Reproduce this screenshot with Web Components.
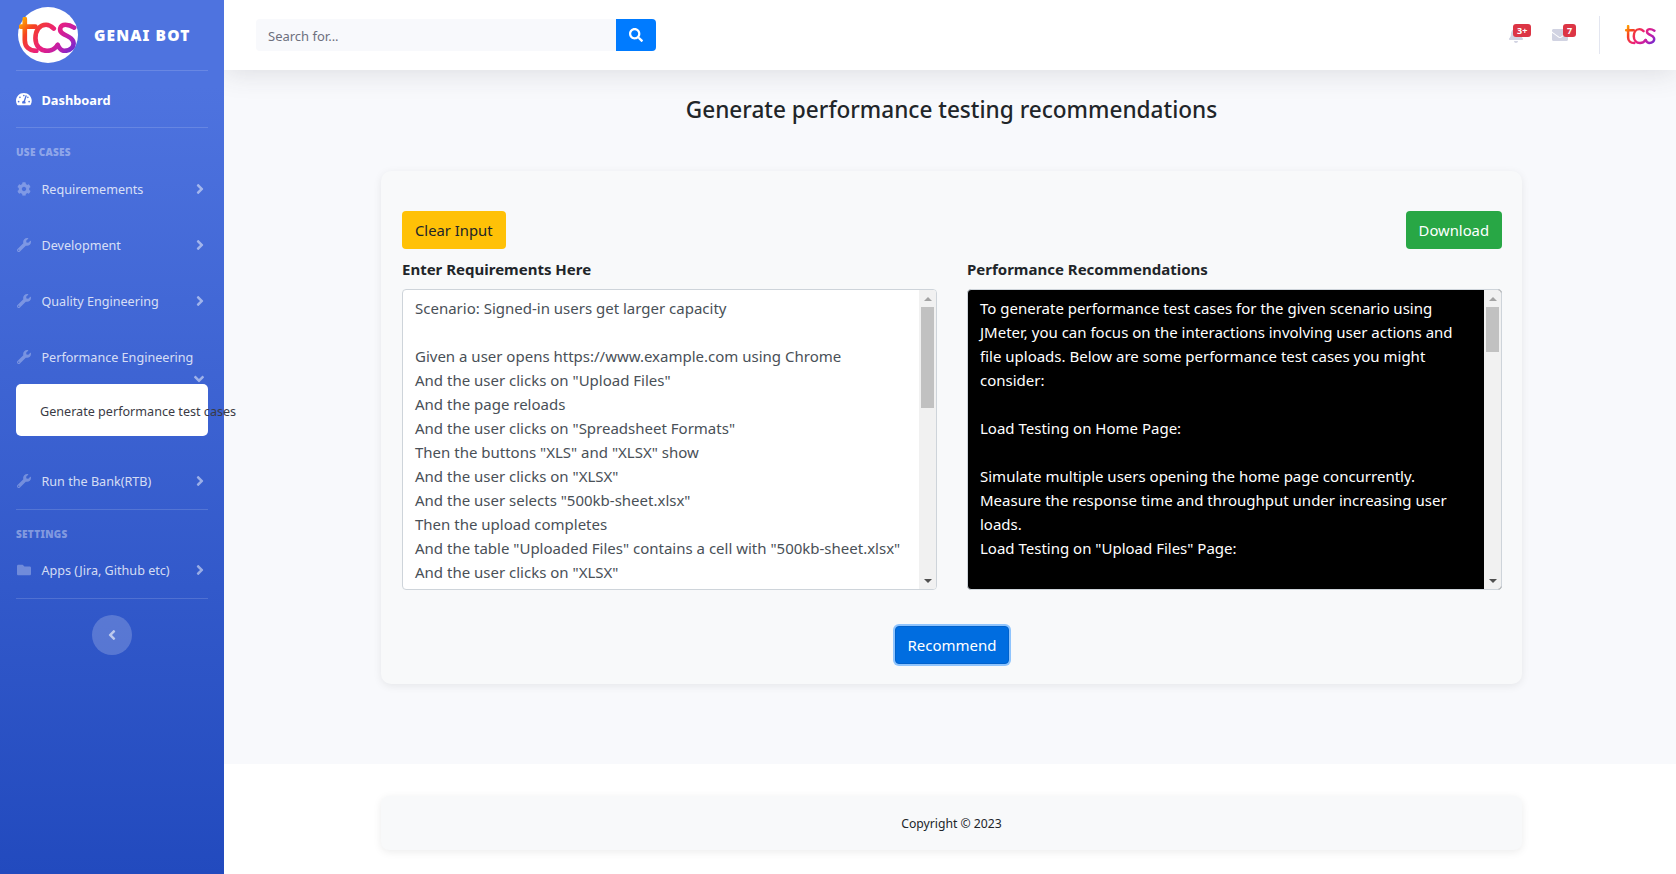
<!DOCTYPE html>
<html lang="en">
<head>
<meta charset="utf-8">
<title>GenAI Bot</title>
<style>
  html, body { margin: 0; height: 100%; }
  body { font-family: "Noto Sans", "Open Sans", sans-serif; font-size: 15px; color: #212529; background: #fff; overflow: hidden; }
  app-shell { display: flex; min-height: 874px; }
</style>
</head>
<body>
<app-shell>
  <side-bar slot="side">
    <brand-head></brand-head>
    <side-rule></side-rule>
    <nav-item icon="gauge" active>Dashboard</nav-item>
    <side-rule></side-rule>
    <side-heading>Use cases</side-heading>
    <nav-item icon="cog" arrow="right">Requiremements</nav-item>
    <nav-item icon="wrench" arrow="right">Development</nav-item>
    <nav-item icon="wrench" arrow="right">Quality Engineering</nav-item>
    <nav-item icon="wrench" arrow="down">Performance Engineering</nav-item>
    <sub-menu>Generate performance test cases</sub-menu>
    <nav-item icon="wrench" arrow="right">Run the Bank(RTB)</nav-item>
    <side-rule></side-rule>
    <side-heading style="margin-bottom:-1px">Settings</side-heading>
    <nav-item icon="folder" arrow="right">Apps (Jira, Github etc)</nav-item>
    <side-rule></side-rule>
    <side-toggle></side-toggle>
  </side-bar>
  <main-column>
    <top-bar></top-bar>
    <page-content>
      <h-title>Generate performance testing recommendations</h-title>
      <recommend-card></recommend-card>
    </page-content>
    <site-footer>Copyright © 2023</site-footer>
  </main-column>
</app-shell>

<script>
const ICONS = {
  gauge: ["0 0 576 512", "M288 32C128.94 32 0 160.94 0 320c0 52.8 14.25 102.26 39.06 144.8 5.61 9.62 16.3 15.2 27.44 15.2h443c11.14 0 21.83-5.58 27.44-15.2C561.75 422.26 576 372.8 576 320c0-159.06-128.94-288-288-288zm0 64c14.71 0 26.58 10.13 30.32 23.65-1.11 2.26-2.64 4.23-3.45 6.67l-9.22 27.67c-5.13 3.49-10.97 6.01-17.64 6.01-17.67 0-32-14.33-32-32S270.33 96 288 96zM96 384c-17.67 0-32-14.33-32-32s14.33-32 32-32 32 14.33 32 32-14.33 32-32 32zm48-160c-17.67 0-32-14.33-32-32s14.33-32 32-32 32 14.33 32 32-14.33 32-32 32zm246.77-72.41l-61.33 184C343.13 347.33 352 364.54 352 384c0 11.72-3.38 22.55-8.88 32H232.88c-5.5-9.45-8.88-20.28-8.88-32 0-33.94 26.5-61.43 59.9-63.59l61.34-184.01c4.17-12.56 17.73-19.45 30.36-15.17 12.57 4.19 19.35 17.79 15.17 30.36zm14.66 57.2l15.52-46.55c3.47-1.29 7.13-2.23 11.05-2.23 17.67 0 32 14.33 32 32s-14.33 32-32 32c-11.38-.01-20.89-6.28-26.57-15.22zM480 384c-17.67 0-32-14.33-32-32s14.33-32 32-32 32 14.33 32 32-14.33 32-32 32z"],
  cog: ["0 0 512 512", "M487.4 315.7l-42.6-24.6c4.3-23.2 4.3-47 0-70.2l42.6-24.6c4.9-2.8 7.1-8.6 5.5-14-11.1-35.6-30-67.8-54.7-94.6-3.8-4.1-10-5.1-14.8-2.3L380.8 110c-17.9-15.4-38.5-27.3-60.8-35.1V25.8c0-5.6-3.9-10.5-9.4-11.7-36.7-8.2-74.3-7.8-109.2 0-5.5 1.2-9.4 6.1-9.4 11.7V75c-22.2 7.9-42.8 19.8-60.8 35.1L88.7 85.5c-4.9-2.8-11-1.9-14.8 2.3-24.7 26.7-43.6 58.9-54.7 94.6-1.7 5.4.6 11.2 5.5 14L67.3 221c-4.3 23.2-4.3 47 0 70.2l-42.6 24.6c-4.9 2.8-7.1 8.6-5.5 14 11.1 35.6 30 67.8 54.7 94.6 3.8 4.1 10 5.1 14.8 2.3l42.6-24.6c17.9 15.4 38.5 27.3 60.8 35.1v49.2c0 5.6 3.9 10.5 9.4 11.7 36.7 8.2 74.3 7.8 109.2 0 5.5-1.2 9.4-6.1 9.4-11.7v-49.2c22.2-7.9 42.8-19.8 60.8-35.1l42.6 24.6c4.9 2.8 11 1.9 14.8-2.3 24.7-26.7 43.6-58.9 54.7-94.6 1.5-5.5-.7-11.3-5.6-14.1zM256 336c-44.1 0-80-35.9-80-80s35.9-80 80-80 80 35.9 80 80-35.9 80-80 80z"],
  wrench: ["0 0 512 512", "M507.73 109.1c-2.24-9.03-13.54-12.09-20.12-5.51l-74.36 74.36-67.88-11.31-11.31-67.88 74.36-74.36c6.62-6.62 3.43-17.9-5.66-20.16-47.38-11.74-99.55.91-136.58 37.93-39.64 39.64-50.55 97.1-34.05 147.2L18.74 402.76c-24.99 24.99-24.99 65.51 0 90.5 24.99 24.99 65.51 24.99 90.5 0l213.21-213.21c50.12 16.71 107.47 5.68 147.37-34.22 37.07-37.07 49.7-89.32 37.91-136.73zM64 472c-13.25 0-24-10.75-24-24 0-13.26 10.75-24 24-24s24 10.74 24 24c0 13.25-10.75 24-24 24z"],
  folder: ["0 0 512 512", "M464 128H272l-64-64H48C21.49 64 0 85.49 0 112v288c0 26.51 21.49 48 48 48h416c26.51 0 48-21.49 48-48V176c0-26.51-21.49-48-48-48z"],
  search: ["0 0 512 512", "M505 442.7L405.3 343c-4.5-4.5-10.6-7-17-7H372c27.6-35.3 44-79.7 44-128C416 93.1 322.9 0 208 0S0 93.1 0 208s93.1 208 208 208c48.3 0 92.7-16.4 128-44v16.3c0 6.4 2.5 12.5 7 17l99.7 99.7c9.4 9.4 24.6 9.4 33.9 0l28.3-28.3c9.4-9.4 9.4-24.6.1-34zM208 336c-70.7 0-128-57.2-128-128 0-70.7 57.2-128 128-128 70.7 0 128 57.2 128 128 0 70.7-57.2 128-128 128z"],
  bell: ["0 0 448 512", "M224 512c35.32 0 63.97-28.65 63.97-64H160.03c0 35.35 28.65 64 63.97 64zm215.39-149.71c-19.32-20.76-55.47-51.99-55.47-154.29 0-77.7-54.48-139.9-127.94-155.16V32c0-17.67-14.32-32-31.98-32s-31.98 14.33-31.98 32v20.84C118.56 68.1 64.08 130.3 64.08 208c0 102.3-36.15 133.53-55.47 154.29-6 6.45-8.66 14.16-8.61 21.71.11 16.4 12.98 32 32.1 32h383.8c19.12 0 32-15.6 32.1-32 .05-7.55-2.61-15.27-8.61-21.71z"],
  envelope: ["0 0 512 512", "M502.3 190.8c3.9-3.1 9.7-.2 9.7 4.7V400c0 26.5-21.5 48-48 48H48c-26.5 0-48-21.5-48-48V195.6c0-5 5.7-7.8 9.7-4.7 22.4 17.4 52.1 39.5 154.1 113.6 21.1 15.4 56.7 47.8 92.2 47.6 35.7.3 72-32.8 92.3-47.6 102-74.1 131.6-96.3 154-113.7zM256 320c23.2.4 56.6-29.2 73.4-41.4 132.7-96.3 142.8-104.7 173.4-128.7 5.8-4.5 9.2-11.5 9.2-18.9v-19c0-26.5-21.5-48-48-48H48C21.5 64 0 85.5 0 112v19c0 7.4 3.4 14.3 9.2 18.9 30.6 23.9 40.7 32.4 173.4 128.7 16.8 12.2 50.2 41.8 73.4 41.4z"],
  right: ["0 0 256 512", "M224.3 273l-136 136c-9.4 9.4-24.6 9.4-33.9 0l-22.6-22.6c-9.4-9.4-9.4-24.6 0-33.9l96.4-96.4-96.4-96.4c-9.4-9.4-9.4-24.6 0-33.9L54.3 103c9.4-9.4 24.6-9.4 33.9 0l136 136c9.5 9.4 9.5 24.6.1 34z"],
  left: ["0 0 256 512", "M31.7 239l136-136c9.4-9.4 24.6-9.4 33.9 0l22.6 22.6c9.4 9.4 9.4 24.6 0 33.9L127.9 256l96.4 96.4c9.4 9.4 9.4 24.6 0 33.9L201.7 409c-9.4 9.4-24.6 9.4-33.9 0l-136-136c-9.5-9.4-9.5-24.6-.1-34z"],
  down: ["0 0 320 512", "M143 352.3L7 216.3c-9.4-9.4-9.4-24.6 0-33.9l22.6-22.6c9.4-9.4 24.6-9.4 33.9 0l96.4 96.4 96.4-96.4c9.4-9.4 24.6-9.4 33.9 0l22.6 22.6c9.4 9.4 9.4 24.6 0 33.9l-136 136c-9.2 9.4-24.4 9.4-33.8 0z"]
};

class FaIcon extends HTMLElement {
  connectedCallback() {
    const [box, d] = ICONS[this.getAttribute("name")];
    const size = this.getAttribute("size") || 16;
    this.attachShadow({mode: "open"}).innerHTML = `
      <style>:host { display: inline-flex; align-items: center; justify-content: center; line-height: 0; }</style>
      <svg height="${size}" viewBox="${box}" fill="currentColor" aria-hidden="true"><path d="${d}"/></svg>`;
  }
}

let logoCount = 0;
class TcsLogo extends HTMLElement {
  connectedCallback() {
    const id = "tcsg" + (logoCount++);
    const w = this.getAttribute("width") || 58;
    this.attachShadow({mode: "open"}).innerHTML = `
      <style>:host { display: inline-flex; line-height: 0; }</style>
      <svg width="${w}" viewBox="0 0 60 37" fill="none" stroke="url(#${id})" stroke-width="4.8" stroke-linecap="round">
        <defs><linearGradient id="${id}" gradientUnits="userSpaceOnUse" x1="4" y1="0" x2="52" y2="40">
          <stop offset="0" stop-color="#ffb000"/><stop offset=".22" stop-color="#f6431f"/>
          <stop offset=".55" stop-color="#ea1f7e"/><stop offset=".82" stop-color="#b81fb0"/><stop offset="1" stop-color="#6f2bd0"/>
        </linearGradient></defs>
        <path d="M6 2 V24 C6 31 11 35 18 35"/>
        <path d="M2 10 H17"/>
        <path d="M36 12 C33 9 30 8 28 8 C21 8 17 14 17 22 C17 30 22 35 29 35 C33 35 37 33 40 29"/>
        <path d="M57 11 C54 9 51 8 48 8 C42 8 41 14 45 17 C49 20 54 20 56 25 C58 31 53 35 47 35 C44 35 42 33 40 29"/>
      </svg>`;
  }
}

class AppShell extends HTMLElement {
  constructor() {
    super();
    this.attachShadow({mode: "open"}).innerHTML = `
      <style>:host { display: flex; align-items: stretch; }</style>
      <slot name="side"></slot><slot></slot>`;
  }
}

class SideBar extends HTMLElement {
  constructor() {
    super();
    this.attachShadow({mode: "open"}).innerHTML = `
      <style>
        :host { display: flex; flex-direction: column; box-sizing: border-box; width: 224px; flex: none; position: relative; z-index: 3;
          background: linear-gradient(180deg, #4e73df 10%, #224abe 100%); }
      </style>
      <slot></slot>`;
  }
}

class BrandHead extends HTMLElement {
  constructor() {
    super();
    this.attachShadow({mode: "open"}).innerHTML = `
      <style>
        :host { display: flex; align-items: center; height: 70px; box-sizing: border-box; padding-left: 18px; }
        .disc { width: 60px; height: 56px; border-radius: 50%; background: #fff; display: flex; align-items: center; justify-content: center; }
        .name { margin-left: 16px; color: #fff; font-weight: 900; font-size: 15.5px; letter-spacing: 1.1px; }
      </style>
      <div class="disc"><tcs-logo width="58"></tcs-logo></div>
      <span class="name">GENAI BOT</span>`;
  }
}

class SideRule extends HTMLElement {
  constructor() {
    super();
    this.attachShadow({mode: "open"}).innerHTML = `
      <style>:host { display: block; height: 1px; margin: 0 16px; background: rgba(255,255,255,.15); }</style>`;
  }
}

class SideHeading extends HTMLElement {
  constructor() {
    super();
    this.attachShadow({mode: "open"}).innerHTML = `
      <style>
        :host { display: block; padding: 17px 16px 0; height: 16px; line-height: 14px; font-size: 10px; font-weight: 900; letter-spacing: .3px;
          text-transform: uppercase; color: rgba(255,255,255,.4); }
      </style><slot></slot>`;
  }
}

class NavItem extends HTMLElement {
  connectedCallback() {
    const icon = this.getAttribute("icon");
    const arrow = this.getAttribute("arrow");
    const active = this.hasAttribute("active");
    this.attachShadow({mode: "open"}).innerHTML = `
      <style>
        :host { display: flex; align-items: center; height: 56px; padding: 0 16px; position: relative; font-size: ${active ? 12.8 : 12.6}px;
          color: ${active ? "#fff" : "rgba(255,255,255,.8)"}; font-weight: ${active ? 700 : 400}; }
        .ic { width: 16px; margin-right: 9.5px; color: ${active ? "#fff" : "rgba(255,255,255,.3)"}; }
        .txt { white-space: nowrap; ${active ? "padding-top: 2px;" : ""} }
        .ar { position: absolute; right: 20px; top: ${arrow === "down" ? "42px" : "20px"}; color: rgba(255,255,255,.5); }
      </style>
      <fa-icon class="ic" name="${icon}" size="14"></fa-icon>
      <span class="txt"><slot></slot></span>
      ${arrow ? `<fa-icon class="ar" name="${arrow}" size="16"></fa-icon>` : ""}`;
  }
}

class SubMenu extends HTMLElement {
  constructor() {
    super();
    this.attachShadow({mode: "open"}).innerHTML = `
      <style>
        :host { display: flex; align-items: center; box-sizing: border-box; height: 52px; margin: -1px 16px 17px; padding: 2px 0 0 24px; background: #fff; border-radius: 5px;
          position: relative; font-size: 12.6px; color: #3a3b45; white-space: nowrap; }
      </style><slot></slot>`;
  }
}

class SideToggle extends HTMLElement {
  constructor() {
    super();
    this.attachShadow({mode: "open"}).innerHTML = `
      <style>
        :host { display: flex; align-items: center; justify-content: center; width: 40px; height: 40px; margin: 16px auto 0; border-radius: 50%;
          background: rgba(255,255,255,.2); color: rgba(255,255,255,.6); }
      </style>
      <fa-icon name="left" size="16"></fa-icon>`;
  }
}

class MainColumn extends HTMLElement {
  constructor() {
    super();
    this.attachShadow({mode: "open"}).innerHTML = `
      <style>:host { display: flex; flex-direction: column; flex: 1; min-width: 0; }</style><slot></slot>`;
  }
}

class TopBar extends HTMLElement {
  constructor() {
    super();
    this.attachShadow({mode: "open"}).innerHTML = `
      <style>
        :host { display: flex; align-items: center; height: 70px; background: #fff; position: relative; z-index: 2;
          box-shadow: 0 2.4px 28px 0 rgba(58,59,69,.15); padding: 0 20px 0 32px; }
        .search { display: flex; width: 400px; height: 32px; }
        .field { flex: 1; background: #f8f9fc; border-radius: 4px 0 0 4px; padding-left: 12px; line-height: 34px; font-size: 13px; color: #6e707e; }
        .go { width: 40px; background: #007bff; color: #fff; border-radius: 0 4px 4px 0; display: flex; align-items: center; justify-content: center; }
        .icons { margin-left: auto; display: flex; align-items: center; }
        .alert { position: relative; color: #d1d3e2; width: 44px; display: flex; justify-content: center; }
        .badge { position: absolute; background: #dc3545; color: #fff; font-size: 9px; font-weight: 700; line-height: 13px; padding: 0 4px; border-radius: 3px; top: -3px; left: 19px; }
        .sep { width: 1px; height: 38px; background: #e3e6f0; margin: 0 25px 0 17px; }
      </style>
      <div class="search">
        <div class="field">Search for...</div>
        <div class="go"><fa-icon name="search" size="14"></fa-icon></div>
      </div>
      <div class="icons">
        <div class="alert"><fa-icon name="bell" size="16"></fa-icon><span class="badge">3+</span></div>
        <div class="alert"><fa-icon name="envelope" size="16"></fa-icon><span class="badge" style="left:25px">7</span></div>
        <div class="sep"></div>
        <tcs-logo width="31"></tcs-logo>
      </div>`;
  }
}

class PageContent extends HTMLElement {
  constructor() {
    super();
    this.attachShadow({mode: "open"}).innerHTML = `
      <style>:host { display: flex; flex-direction: column; align-items: center; flex: none; height: 694px; padding-left: 3px; background: #f8f9fc; }</style>
      <slot></slot>`;
  }
}

class HTitle extends HTMLElement {
  constructor() {
    super();
    this.attachShadow({mode: "open"}).innerHTML = `
      <style>
        :host { display: block; margin: 20px 0 41px; height: 40px; line-height: 40px; font-size: 22.6px; font-weight: 500; color: #212529; text-align: center; }
      </style><slot></slot>`;
  }
}

class AppButton extends HTMLElement {
  constructor() {
    super();
    this.attachShadow({mode: "open"}).innerHTML = `
      <style>
        :host { display: inline-block; box-sizing: border-box; height: 38px; line-height: 36px; padding: 0 var(--btn-pad, 12px); border: 1px solid var(--btn-line, transparent); border-radius: 4px;
          font-size: var(--btn-size, 14.8px); background: var(--btn-bg, #007bff); color: var(--btn-fg, #fff); box-shadow: var(--btn-ring, none); }
      </style><slot></slot>`;
  }
}

class TextPanel extends HTMLElement {
  constructor() {
    super();
    this.attachShadow({mode: "open"}).innerHTML = `
      <style>
        :host { display: flex; flex-direction: column; min-width: 0; }
        .label { font-weight: 700; font-size: 15px; line-height: 24px; height: 24px; margin: 8px 0 8px; color: #212529; }
        .box { display: flex; height: 301px; box-sizing: border-box; border: 1px solid #ced4da; border-radius: 4px; overflow: hidden;
          background: var(--panel-bg, #fff); color: var(--panel-fg, #495057); }
        .text { flex: 1; padding: 6px 12px; font-size: 15px; line-height: 24px; overflow: hidden; min-width: 0; }
        .bar { width: 17px; flex: none; background: #f1f1f1; display: flex; flex-direction: column; align-items: center; }
        .arrow { height: 17px; flex: none; display: flex; align-items: center; justify-content: center; }
        .thumb { width: 13px; height: var(--thumb-h, 101px); flex: none; background: #c1c1c1; }
        .rest { flex: 1; }
        .up { width: 0; height: 0; border: 4px solid transparent; border-top: 0; border-bottom: 4px solid #a3a3a3; }
        .dn { width: 0; height: 0; border: 4px solid transparent; border-bottom: 0; border-top: 4px solid #505050; }
      </style>
      <div class="label"><slot name="label"></slot></div>
      <div class="box">
        <div class="text"><slot></slot></div>
        <div class="bar">
          <div class="arrow"><span class="up"></span></div>
          <div class="thumb"></div><div class="rest"></div>
          <div class="arrow"><span class="dn"></span></div>
        </div>
      </div>`;
  }
}

class RecommendCard extends HTMLElement {
  constructor() {
    super();
    this.attachShadow({mode: "open"}).innerHTML = `
      <style>
        :host { display: block; box-sizing: border-box; width: 1141px; height: 513px; padding: 40px 20px 0 21px; background: #f8f9fa; border-radius: 10px;
          box-shadow: 0 2px 8px rgba(0,0,0,.08); }
        .acts { display: flex; justify-content: space-between; }
        .cols { display: grid; grid-template-columns: 1fr 1fr; column-gap: 30px; }
        .cols div { white-space: nowrap; }
        .foot { display: flex; justify-content: center; margin-top: 36px; }
        .clear { --btn-bg: #ffc107; --btn-fg: #212529; }
        .down { --btn-bg: #28a745; }
        .rec { --btn-bg: #006de0; --btn-line: #0062cc; --btn-pad: 11px; --btn-size: 15px; --btn-ring: 0 0 0 2px rgba(38,143,255,.5); }
        .dark { --panel-bg: #000; --panel-fg: #fff; --thumb-h: 45px; }
        .dark div { white-space: normal; }
      </style>
      <div class="acts">
        <app-button class="clear">Clear Input</app-button>
        <app-button class="down">Download</app-button>
      </div>
      <div class="cols">
        <text-panel>
          <span slot="label">Enter Requirements Here</span>
          <div>Scenario: Signed-in users get larger capacity</div>
          <div>&nbsp;</div>
          <div>Given a user opens https://www.example.com using Chrome</div>
          <div>And the user clicks on "Upload Files"</div>
          <div>And the page reloads</div>
          <div>And the user clicks on "Spreadsheet Formats"</div>
          <div>Then the buttons "XLS" and "XLSX" show</div>
          <div>And the user clicks on "XLSX"</div>
          <div>And the user selects "500kb-sheet.xlsx"</div>
          <div>Then the upload completes</div>
          <div>And the table "Uploaded Files" contains a cell with "500kb-sheet.xlsx"</div>
          <div>And the user clicks on "XLSX"</div>
        </text-panel>
        <text-panel class="dark">
          <span slot="label">Performance Recommendations</span>
          <div>To generate performance test cases for the given scenario using JMeter, you can focus on the interactions involving user actions and file uploads. Below are some performance test cases you might consider:</div>
          <div>&nbsp;</div>
          <div>Load Testing on Home Page:</div>
          <div>&nbsp;</div>
          <div>Simulate multiple users opening the home page concurrently.</div>
          <div>Measure the response time and throughput under increasing user loads.</div>
          <div>Load Testing on "Upload Files" Page:</div>
        </text-panel>
      </div>
      <div class="foot"><app-button class="rec">Recommend</app-button></div>`;
  }
}

class SiteFooter extends HTMLElement {
  constructor() {
    super();
    this.attachShadow({mode: "open"}).innerHTML = `
      <style>
        :host { display: flex; justify-content: center; flex: 1; background: #fff; padding: 32px 0 0 3px; font-size: 12.2px; color: #212529; }
        .bar { box-sizing: border-box; width: 1141px; height: 54px; background: #f8f9fa; border-radius: 8px; box-shadow: 0 2px 8px rgba(0,0,0,.08);
          display: flex; align-items: center; justify-content: center; }
      </style>
      <div class="bar"><slot></slot></div>`;
  }
}

customElements.define("fa-icon", FaIcon);
customElements.define("tcs-logo", TcsLogo);
customElements.define("app-shell", AppShell);
customElements.define("side-bar", SideBar);
customElements.define("brand-head", BrandHead);
customElements.define("side-rule", SideRule);
customElements.define("side-heading", SideHeading);
customElements.define("nav-item", NavItem);
customElements.define("sub-menu", SubMenu);
customElements.define("side-toggle", SideToggle);
customElements.define("main-column", MainColumn);
customElements.define("top-bar", TopBar);
customElements.define("page-content", PageContent);
customElements.define("h-title", HTitle);
customElements.define("app-button", AppButton);
customElements.define("text-panel", TextPanel);
customElements.define("recommend-card", RecommendCard);
customElements.define("site-footer", SiteFooter);
</script>
</body>
</html>
